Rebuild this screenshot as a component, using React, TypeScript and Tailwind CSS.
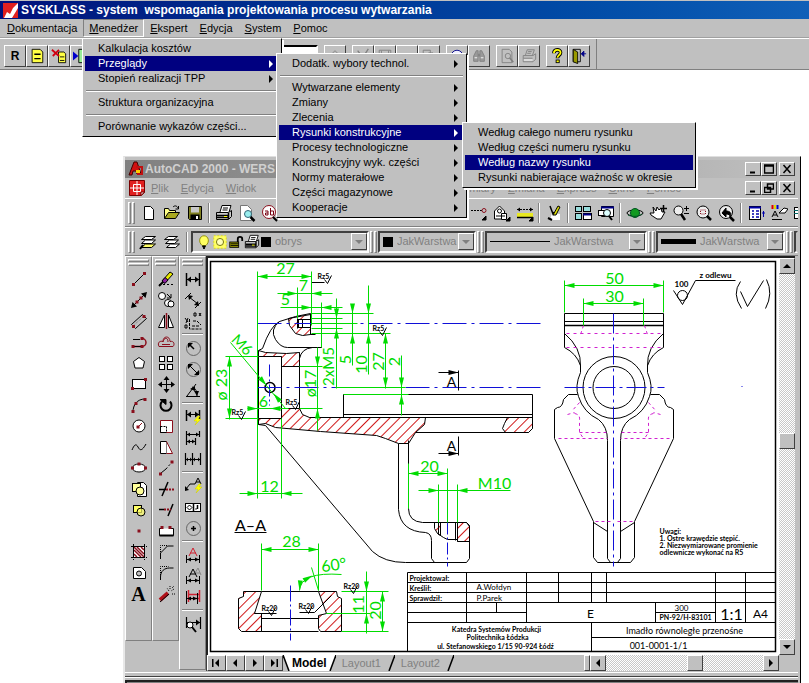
import React from 'react';

type Kids = { children?: React.ReactNode };

/* ---------- icons ---------- */

function Icon({ children, small }: Kids & { small?: boolean }) {
  return (
    <svg
      viewBox="0 0 18 18"
      className={small ? 'h-4 w-4 shrink-0' : 'h-[18px] w-[18px] shrink-0'}
      fill="none"
      stroke="#000"
      strokeWidth="1"
      aria-hidden="true"
    >
      {children}
    </svg>
  );
}

const RED = '#8a0f1c';
const Dot = ({ x, y, c = RED }: { x: number; y: number; c?: string }) => (
  <rect x={x - 1.5} y={y - 1.5} width="3" height="3" fill={c} stroke="none" />
);

const glyph: Record<string, React.ReactNode> = {
  /* draw */
  line: <><path d="M3.5 14.5l11-11" /><Dot x={3.5} y={14.5} /><Dot x={14.5} y={3.5} /></>,
  xline: <><path d="M2 16L16 2" /><path d="M1 17l1.500-6 4.500 4.500zM17 1l-6 1.500 4.500 4.500z" fill="#000" stroke="none" /><Dot x={7} y={11} /><Dot x={11} y={7} /></>,
  mline: <><path d="M1.500 12.500l11-10M5.500 16.500l11-10" /><path d="M3 14l11-10" stroke="#777" strokeDasharray="1 1" /><path d="M1.500 12.500l4 4M12.500 2.500l4 4" /><Dot x={3.500} y={14.500} /><Dot x={14} y={4.500} /></>,
  pline: <><path d="M12 5.500a4 4 0 0 1 0 8H3" stroke={RED} strokeWidth="1.500" /><path d="M3 6.500h7M3 13.500h9" /><Dot x={3} y={13.500} /><Dot x={12} y={13.500} /><Dot x={12} y={5.500} /></>,
  polygon: <path d="M9 3.500l5.500 4-1.500 6.500h-8L3.500 7.500z" fill="#fff" />,
  rect: <><rect x="2.500" y="4.500" width="13" height="9" fill="#fff" /><Dot x={2.500} y={13.500} /><Dot x={15.500} y={4.500} /></>,
  arc: <><path d="M3 16C3 9 7 3 15 3" /><Dot x={3} y={15.500} /><Dot x={6} y={7.500} /><Dot x={15} y={3.500} /></>,
  circle: <><circle cx="9" cy="9" r="6" fill="#fff" /><path d="M8 10l4-4" stroke={RED} /><Dot x={8} y={10} /></>,
  spline: <path d="M2 12c2-5 4-7 6-3s4 4 8-3" />,
  ellipse: <><ellipse cx="9" cy="9" rx="6.500" ry="4" fill="#fff" /><Dot x={2.500} y={9} /><Dot x={9} y={5} /><Dot x={15.500} y={9} /></>,
  insert: <><path d="M7.500 2.500h6l3 3v11h-9z" fill="#fff" /><rect x="2.500" y="3.500" width="8" height="8" fill="#ff9" /><circle cx="10" cy="11" r="4" fill="#ff9" /></>,
  block: <><rect x="3.500" y="4.500" width="8" height="7" fill="#ff6" /><circle cx="11" cy="11" r="4" fill="#ff6" fillOpacity=".7" /></>,
  point: <Dot x={9} y={9} />,
  hatch: <><rect x="3.500" y="3.500" width="11" height="11" fill="#fff" /><path d="M4 7l7 7M4 11l3 3M7 4l7 7M11 4l3 3M4 4l10 10" stroke={RED} strokeWidth="1.500" /><path d="M1 3.500h16M1 14.500h16M3.500 1v16M14.500 1v16" strokeDasharray="2 1" /></>,
  region: <><path d="M3.500 3.500h8l4 4v7h-12z" fill="#fff" /><circle cx="9" cy="9.500" r="2.500" fill="#c0c0c0" /></>,
  /* modify */
  erase: <><path d="M2 14.500h14" strokeDasharray="2 2" /><path d="M5 11l8-9 3 2-8 9z" fill="#e8e800" /><path d="M5 11l3-3.500 3 2.500-3 3.500z" fill="#8c1ea0" /><path d="M2 16l4-4" strokeWidth="2" /></>,
  copy: <><circle cx="5" cy="5" r="3.500" fill="#fff" /><circle cx="11" cy="12" r="3.500" fill="#fff" /><circle cx="14" cy="13" r="3" fill="#fff" /><path d="M10 3l4 4M14 3v4h-4" /></>,
  mirror: <><path d="M7.500 3v12.500h-6z" fill="#fff" /><path d="M11.500 3v12.500h5z" fill="#fff" /><path d="M9.500 1v16" stroke={RED} strokeWidth="1.500" /></>,
  offset: <><path d="M2 13.500c-2-4 1-6 4-5 0-6 7-6 7 0 4-1 5 3 3 5z" stroke={RED} /><path d="M5 11.500h8M6 9c1-5 5-5 5 0" stroke={RED} /></>,
  array: <><rect x="2.500" y="2.500" width="5" height="5" fill="#fff" /><rect x="10.500" y="2.500" width="5" height="5" fill="#fff" /><rect x="2.500" y="10.500" width="5" height="5" fill="#fff" /><rect x="10.500" y="10.500" width="5" height="5" fill="#fff" /></>,
  move: <><path d="M9.500 3v12M3 9.500h13" /><path d="M9.500 1l3 4h-6zM9.500 18l3-4h-6zM1 9.500l4-3v6zM18 9.500l-4-3v6z" fill="#000" stroke="none" /></>,
  rotate: <><path d="M5 5.500a5.500 5.500 0 1 0 8 0" strokeWidth="2" /><path d="M3 3.500h6v5z" fill="#000" /></>,
  scale: <><path d="M3.500 3.500h12v12h-12z" fill="#fff" stroke={RED} /><path d="M3.500 9.500h6v6" strokeDasharray="2 1" /><path d="M3.500 9v6.500h6" /></>,
  stretch: <><path d="M3.500 3.500h6v12h-6z" fill="#fff" /><path d="M9.500 3.500l6 12h-6" fill="#fff" stroke={RED} /></>,
  lengthen: <><path d="M4 14l5-4" /><path d="M9 10l6-7" strokeDasharray="2 2" /><Dot x={3.500} y={15} /><Dot x={15} y={3} /></>,
  trim: <><path d="M2 9.500h7M5 16l6-14" strokeWidth="1.500" /><path d="M9 9.500h8" stroke={RED} strokeDasharray="2 1" strokeWidth="2" /></>,
  extend: <><path d="M2 8.500h5M11 15l5-12" strokeWidth="1.500" /><path d="M7 8.500h7" stroke={RED} strokeDasharray="2 1" strokeWidth="2" /></>,
  breakAt: <><path d="M5 6.500H2.500v7h14v-7h-3" fill="#fff" /><path d="M2.500 13.500h14" strokeWidth="2" /><Dot x={5} y={5.500} /><Dot x={13} y={5.500} /></>,
  chamfer: <><path d="M3.500 16v-6l7-7h6" /><path d="M3.500 9V2.500h7" strokeDasharray="1 1" /></>,
  fillet: <><path d="M3.500 16v-3c0-6 4-9 9-9h4" /><path d="M3.500 11V2.500h8" strokeDasharray="1 1" /></>,
  explode: <><path d="M3 15l8-7" stroke="#b01018" strokeWidth="4" /><path d="M3 17l9-8" strokeWidth="1" /><path d="M13 1v3M17 4l-3 2M12 6l-2-3M15 9h3M15 3l2-2" strokeDasharray="1 1" /></>,
  /* dimension */
  linear: <><path d="M2.500 3v13M15.500 3v13" strokeWidth="1.500" /><path d="M3 9.500h12" /><path d="M3 9.500l4-3v6zM15 9.500l-4-3v6z" fill="#000" stroke="none" /></>,
  aligned: <><path d="M1 8l6-6M11 17l6-6M5 6l9 7" /><path d="M4 4l5 1-4 4zM15 15l-5-1 4-4z" fill="#000" stroke="none" /></>,
  ordinate: <><path d="M5.500 7v10h12M9 9h4l4 4M8 14h8" strokeDasharray="3 1" /><path d="M1 6l3 4M4 6l-2 5M10 1h2v3h-2zM15 1l2 3M17 1l-2 3M1 13h2v3H1z" /></>,
  radius: <><circle cx="9.500" cy="9.500" r="7" stroke="#666" /><path d="M10 10L5 5" strokeWidth="1.500" /><path d="M4 4h5l-5 5z" fill="#000" stroke="none" /></>,
  diameter: <><circle cx="9.500" cy="9.500" r="7" stroke="#666" /><path d="M6 6l7 7" /><path d="M4 4h5l-5 5zM15 15h-5l5-5z" fill="#000" stroke="none" /></>,
  angular: <><path d="M2 15.500h14M3 15L12 3" /><path d="M8 6c4 1 5 5 5 9" /><path d="M6 8l5-3v5zM13 15l-3-5h5z" fill="#000" stroke="none" /></>,
  quick: <><path d="M2.500 2v11M15.500 2v9" strokeWidth="1.500" /><path d="M3 6.500h12" /><path d="M3 6.500l4-3v6zM15 6.500l-4-3v6z" fill="#000" stroke="none" /><path d="M14 8l-4 5h3l-2 4 6-6h-3l2-3z" fill="#ff0" stroke="#cc0" strokeWidth=".5" /></>,
  baseline: <><path d="M2.500 2v14M15.500 2v6M11.500 9v7M3 5.500h12M3 12.500h8" strokeWidth="1.200" /><path d="M3 5.500l3-2v4zM15 5.500l-3-2v4zM3 12.500l3-2v4zM11 12.500l-3-2v4z" fill="#000" stroke="none" /></>,
  cont: <><path d="M1.500 3v12M8.500 3v12M16.500 3v12M2 9.500h14" strokeWidth="1.200" /><path d="M2 9.500l2-2v4zM8 9.500l-2-2v4zM9 9.500l2-2v4zM16 9.500l-2-2v4z" fill="#000" stroke="none" /></>,
  leader: <><path d="M2 12l4-5h5" /><path d="M1 14v-5l4 4z" fill="#000" stroke="none" /><path d="M11 7l3-6 3 6M12 5h4" /><path d="M15 7l-4 5h3l-2 4 6-6h-3l2-3z" fill="#ff0" stroke="#cc0" strokeWidth=".5" /></>,
  tolerance: <><rect x="1.500" y="5.500" width="15" height="8" fill="#fff" /><path d="M9.500 5v8M13.500 7v4M11.500 11h1" strokeWidth="1.500" /><path d="M5.500 7l2.500 2.500L5.500 12 3 9.500z" /></>,
  center: <><circle cx="9.500" cy="9.500" r="7" stroke="#666" /><path d="M9.500 7v5M7 9.500h5" strokeWidth="1.500" /></>,
  dimEdit: <><path d="M5 10l4-8 4 8M6 7h6" stroke="#d02030" /><path d="M2.500 9v8M15.500 9v8M3 13.500h12" /><path d="M3 13.500l4-2v4zM15 13.500l-4-2v4z" fill="#000" stroke="none" /></>,
  dimText: <><path d="M11 6l3-5 3 7M12 6h4" stroke="#888" /><path d="M5 10l4-8 4 8M6 7h6" /><path d="M2.500 9v8M15.500 9v8M3 13.500h12" /><path d="M3 13.500l4-2v4zM15 13.500l-4-2v4z" fill="#000" stroke="none" /></>,
  update: <><path d="M4.500 2v12M15.500 2v12M5 6.500h11M4 10.500h12" stroke="#d02030" strokeWidth="1.500" /><path d="M2.500 3v13M13.500 5v11M3 10.500h10" /><path d="M3 10.500l4-2v4zM13 10.500l-4-2v4z" fill="#000" stroke="none" /></>,
  dimStyle: <><path d="M2.500 2v11M16.500 2v12M3 7.500h13" strokeWidth="1.200" /><path d="M16 7.500l-4-3v6z" fill="#000" stroke="none" /><circle cx="6" cy="10" r="3" fill="#fff" /><path d="M8 12l4 5" strokeWidth="2" /></>,
  /* standard */
  page: <path d="M4.500 2.500h6l3 3v10h-9z" fill="#fff" />,
  open: <><path d="M1.500 14.500v-10h4l1 2h6v3" fill="#ff8" /><path d="M1.500 14.500l4-6h11l-4 6z" fill="#a8a820" /><path d="M10 3c2-2 4-1 5 1M15.500 2v3h-3" /></>,
  save: <><path d="M2.500 2.500h13v13h-12l-1-1z" fill="#808020" /><rect x="5" y="3" width="8" height="5.500" fill="#c8c8c8" stroke="none" /><rect x="5" y="11" width="8" height="4.500" fill="#000" /><rect x="10" y="12" width="2" height="3" fill="#fff" stroke="none" /></>,
  print: <><path d="M5 8l2-6.500h9L14 8" fill="#fff" /><path d="M8 4h5M7.500 6h5" /><path d="M1.500 8.500h12l3-2v6l-3 3h-12z" fill="#ccc" /><path d="M2 11.500h11M2 13.500h11M13.500 9v6" strokeWidth="1.500" /><rect x="9" y="12" width="3" height="1" fill="#ff0" stroke="none" /></>,
  preview: <><path d="M2.500 1.500h7l4 4v11h-11z" fill="#fff" stroke="#777" /><circle cx="10" cy="10" r="3.500" fill="#9ee" stroke="#367" /><path d="M12.500 13l4 4" strokeWidth="2.500" /></>,
  find: <><circle cx="8" cy="8" r="6.500" fill="#fff" stroke={RED} /><path d="M12 13l4 4" strokeWidth="2" /><path d="M4 7h3v4H4.500V9H7M9.500 4v7h3V7h-3" stroke="#701" /></>,
  track: <><path d="M1 6.500h11" strokeDasharray="2 1" /><circle cx="14" cy="6.500" r="2" stroke={RED} /><path d="M16 12v4h-4z" fill="#000" /></>,
  snap: <><path d="M1.500 7l5-5 5 5v8h-10z" fill="#fff" /><circle cx="6.500" cy="7" r="2" /><path d="M8.500 9.500h5v6h-5zM3 12h9" fill="#fff" /><path d="M17 13v4h-4z" fill="#000" /></>,
  distance: <><path d="M1 5.500h16" strokeDasharray="2 1" /><path d="M1 5.500l3-2v4zM17 5.500l-3-2v4z" fill="#000" stroke="none" /><rect x="1" y="9" width="16" height="4" fill="#e8e820" stroke="none" /><path d="M1 13.500h16" strokeWidth="1.500" /><path d="M17 13v4h-4z" fill="#000" /></>,
  redraw: <><path d="M7 9l8 1v6H5z" fill="#fff" stroke="none" /><path d="M5 2l3 8 1-2" strokeWidth="1.500" /><path d="M8 11l5-9 2 1-4 8z" fill="#dd0" /><path d="M3 14l4 2" strokeWidth="2" /></>,
  views: <><rect x="1.500" y="2.500" width="6" height="5" fill="#9dd" /><rect x="9.500" y="2.500" width="7" height="5" fill="#9dd" /><rect x="1.500" y="9.500" width="6" height="6" fill="#9dd" /><rect x="9.500" y="9.500" width="8" height="6" fill="#fff" /><path d="M9 10.500h8" stroke="#008" strokeWidth="2" /></>,
  named: <><path d="M4.500 2.500h12v10h-12z" fill="#fff" /><path d="M4 3.500h13" stroke="#008" strokeWidth="2" /><rect x="1.500" y="6.500" width="7" height="5" fill="#fff" /><circle cx="10" cy="9" r="3.500" fill="#dff" /><path d="M12 12l3 4" strokeWidth="2" /></>,
  orbit: <><ellipse cx="9" cy="9" rx="8" ry="3" /><circle cx="9" cy="9" r="4.500" fill="#119a20" stroke="#052" /><path d="M2 11c4 2 10 2 14-1" stroke="#052" /></>,
  pan: <><path d="M4 3l3 4 1-4 2 3 2-2 1 4 3 0-4 7H8L2 11l-1-2 4 0z" fill="#fff" /><path d="M14.500 1v7M11 4.500h7" strokeWidth="1.500" /></>,
  zoomRt: <><circle cx="6.500" cy="6.500" r="4.500" fill="#eee" /><path d="M9 10l4 6" strokeWidth="2.500" /><path d="M12 4.500h5M14.500 2v5M12 9.500h5" /></>,
  zoomWin: <><circle cx="8" cy="8" r="6" fill="#eee" /><rect x="5.500" y="6" width="5" height="4" stroke={RED} strokeDasharray="1 1" /><path d="M12 12l4 4" strokeWidth="2.500" /></>,
  zoomPrev: <><circle cx="8" cy="8" r="6.500" fill="#eee" /><path d="M12 13l4 4" strokeWidth="2.500" /><path d="M4 9l4-5v3c4 0 6 2 4 6 0-2-1-3-4-3v3z" fill="#000" /></>,
  props: <><rect x="2.500" y="2.500" width="11" height="13" fill="#fff" /><path d="M2 3.500h12" stroke="#00a" strokeWidth="2" /><path d="M5 7h2M9 7h3M5 10h2M9 10h3M5 13h2M9 13h3" stroke="#00a" strokeWidth="1.500" /><path d="M16.500 7v6M15 9h3" stroke="#00a" /></>,
  match: <><path d="M2.500 1v4" stroke="#d00" strokeWidth="2" /><path d="M5 1v4" stroke="#dd0" strokeWidth="2" /><path d="M7.500 1v4" stroke="#00c" strokeWidth="2" /><path d="M2 13l3-6 3 6M3 11h4M2 15.500h10" /><path d="M9 9l5-5 4 1-3 4h-3z" fill="#fff" /></>,
  grid: <><rect x="1.500" y="3.500" width="14" height="11" fill="#fff" /><path d="M1 6.500h14M1 9.500h14M6.500 4v10" stroke="#066" /></>,
  /* layers */
  makeLayer: <><path d="M6.500 3.500h10l-4 3h-10z" fill="#fff" /><path d="M6.500 7h10l-4 3.500h-10z" fill="#fff" /><path d="M6.500 11h10l-4 3.500h-10z" fill="#ff6" /><path d="M1 16l3-4" strokeWidth="2" /></>,
  layers: <><path d="M5.500 3.500h9l-4 3h-9z" fill="#fff" /><path d="M6.500 7h9l-4 3.500h-9z" fill="#fff" /><path d="M7.500 11h9l-4 3.500h-9z" fill="#fff" /></>,
  bulb: <><path d="M7 13C2 9 4 2 9 2s7 7 2 11z" fill="#ffff60" stroke="#880" /><path d="M7 14h4M8 16h2" strokeWidth="2" /></>,
  sun: <><rect x="2" y="2" width="14" height="14" fill="#ff6" stroke="#dd0" strokeDasharray="2 2" /><circle cx="9" cy="9" r="4" fill="#ffb" stroke="#660" /></>,
  lock: <><path d="M11 9V5.500c0-3 5-3 5 0V8" strokeWidth="2" /><rect x="2" y="9" width="10" height="6" fill="#990" /><path d="M3 11h9M3 13h9" /></>,
  /* host application */
  doc: <><path d="M3.500 1.500h9l3 3v12h-12z" fill="#ff4" /><path d="M6 7h7M6 12h7" strokeWidth="1.500" /></>,
  docDel: <><path d="M8.500 4.500h6l2 2v10h-8z" fill="#ff4" /><path d="M10 10h5M10 14h5" /><path d="M1 2l8 7M9 2L2 9" stroke="#d00010" strokeWidth="2" /></>,
  docNext: <><path d="M6.500 1.500h10v15h-10z" fill="#9e9" /><path d="M0 4l6 5-6 5z" fill="#00c" stroke="none" /></>,
  find2: <g stroke="#808080"><path d="M3 15v-6l3-6h2v12zM10 15V3h2l3 6v6z" fill="#999" /><path d="M8 8h2" strokeWidth="3" /><path d="M4 11h3M11 11h3" stroke="#fff" /></g>,
  previewOff: <g stroke="#808080"><path d="M3.500 1.500h8l3 3v12h-11z" /><circle cx="10" cy="9" r="3" /><path d="M12 11l4 5" strokeWidth="2" /></g>,
  printOff: <g stroke="#808080"><path d="M5 8l2-6h8l-2 6M2.500 8.500h11l3-2v6l-3 3h-11zM3 11.500h10M8 4h4M7 6h4" /><path d="M3 13.500h10" stroke="#fff" /></g>,
  help: <><path d="M5.500 6c0-5 7.500-5 7.500-1 0 3-3.500 3-3.500 6.500" strokeWidth="4" /><path d="M5.500 6c0-5 7.500-5 7.500-1 0 3-3.500 3-3.500 6" stroke="#ff0" strokeWidth="2" /><rect x="8" y="13.500" width="3.500" height="3" fill="#ff0" /></>,
  exit: <><path d="M2.500 1.500h8v14h-8z" /><path d="M2.500 1.500l5 3v13l-5-2z" fill="#990" /><path d="M12 6.500h5M11.500 6.500l3-3v6z" stroke="#008" fill="#008" /></>,
  folder: <g stroke="#808080"><path d="M4 16V8l5-5 5 5v8" /></g>,
  scissors: <g stroke="#808080" strokeWidth="1.500"><path d="M3 3l9 12M15 1L6 15" /></g>,
  floppy: <g stroke="#808080"><path d="M2.500 2.500h13v13h-13zM5 3v5h8V3" /></g>,
  undo: <g stroke="#808080"><path d="M3 10c3-5 9-5 11 1" strokeWidth="1.500" /></g>,
  paste: <g stroke="#808080"><path d="M2.500 2.500h8v12h-8zM8.500 5.500h5l3 3v8h-8z" /></g>,
  lens: <circle cx="9" cy="9" r="6.500" stroke="#008" fill="#eef" />,
};

/* ---------- shared chrome ---------- */

const raised = 'border border-t-white border-l-white border-r-[#404040] border-b-[#404040] bg-[#c0c0c0]';

function Tool({ name, label, w = 'w-[23px]' }: { name: string; label: string; w?: string }) {
  return (
    <button type="button" aria-label={label} className={`flex h-[21px] shrink-0 items-center justify-center ${w}`}>
      <Icon>{glyph[name]}</Icon>
    </button>
  );
}

function Big({ name, label }: { name?: string; label: string }) {
  return (
    <button type="button" aria-label={label} className={`flex h-[22px] w-[22px] shrink-0 items-center justify-center text-[12px] font-bold ${raised}`}>
      {name ? <Icon small>{glyph[name]}</Icon> : label}
    </button>
  );
}

const VSep = () => <div className="mx-[2px] h-5 w-[2px] shrink-0 border-l border-r border-l-[#808080] border-r-white" />;

const Grip = () => (
  <div className="flex h-[22px] shrink-0 gap-px">
    <div className="w-[3px] border border-t-white border-l-white border-r-[#808080] border-b-[#808080]" />
    <div className="w-[3px] border border-t-white border-l-white border-r-[#808080] border-b-[#808080]" />
  </div>
);

function MenuBarItem({ text, open }: { text: string; open?: boolean }) {
  return (
    <button
      type="button"
      className={`h-[18px] shrink-0 border px-[5px] leading-4 ${open ? 'border-t-[#808080] border-l-[#808080] border-r-white border-b-white' : 'border-transparent'}`}
    >
      <u>{text[0]}</u>
      {text.slice(1)}
    </button>
  );
}

type Entry = { text: string; sub?: boolean; on?: boolean } | null;

function Menu({ items, place, label }: { items: Entry[]; place: string; label: string }) {
  return (
    <div
      role="menu"
      aria-label={label}
      className={`absolute border border-t-white border-l-white border-r-black border-b-black bg-[#c0c0c0] p-[2px] shadow-[2px_2px_0_#fff] ${place}`}
    >
      {items.map((it, i) =>
        it ? (
          <button
            key={i}
            type="button"
            role="menuitem"
            className={`flex h-[15px] w-full items-center justify-between pl-[13px] pr-[6px] leading-[15px] ${it.on ? 'bg-[#000080] text-white' : ''}`}
          >
            {it.text}
            {it.sub && (
              <svg viewBox="0 0 4 8" className="h-2 w-1" fill="currentColor" aria-hidden="true">
                <path d="M0 0l4 4-4 4z" />
              </svg>
            )}
          </button>
        ) : (
          <div key={i} className="flex h-[9px] items-center px-px">
            <div className="h-[2px] flex-1 border-t border-b border-t-[#808080] border-b-white" />
          </div>
        ),
      )}
    </div>
  );
}

function WinButton({ label, children }: Kids & { label: string }) {
  return (
    <button type="button" aria-label={label} className={`flex h-[14px] w-4 items-center justify-center ${raised}`}>
      <svg viewBox="0 0 10 10" className="h-[10px] w-[10px]" fill="none" stroke="#000" strokeWidth="1.500" aria-hidden="true">
        {children}
      </svg>
    </button>
  );
}

const Tri = ({ dir, c = '#000' }: { dir: 'u' | 'd' | 'l' | 'r'; c?: string }) => (
  <svg viewBox="0 0 8 8" className="h-2 w-2" fill={c} aria-hidden="true">
    <path d={{ u: 'M4 2l4 4H0z', d: 'M4 6l4-4H0z', l: 'M2 4l4-4v8z', r: 'M6 4L2 0v8z' }[dir]} />
  </svg>
);

function Combo({ label, value, w, children }: Kids & { label: string; value: string; w: string }) {
  return (
    <div className={`flex h-[22px] shrink-0 items-center border-2 border-t-[#404040] border-l-[#404040] border-r-white border-b-white pl-[3px] ${w}`}>
      {children}
      <select aria-label={label} className="min-w-0 flex-1 appearance-none bg-transparent pl-1 text-[#808080]">
        <option>{value}</option>
      </select>
      <span className={`flex h-[17px] w-4 shrink-0 items-center justify-center ${raised}`}>
        <Tri dir="d" c="#808080" />
      </span>
    </div>
  );
}

function SideBar({ items, label, h }: { items: (string | null)[]; label: string; h: string }) {
  return (
    <div role="toolbar" aria-label={label} className={`w-[27px] shrink-0 border border-t-white border-l-white border-r-[#808080] border-b-[#808080] ${h}`}>
      <div className="mx-[2px] mt-[2px] mb-[2px] flex flex-col gap-px">
        <div className="h-[3px] border border-t-white border-l-white border-r-[#808080] border-b-[#808080]" />
        <div className="h-[3px] border border-t-white border-l-white border-r-[#808080] border-b-[#808080]" />
      </div>
      {items.map((n, i) =>
        n === 'text' ? (
          <button key={i} type="button" className="h-[23px] w-full font-['Liberation_Serif',serif] text-[20px] leading-[23px] font-bold">A</button>
        ) : n ? (
          <Tool key={i} name={n} label={n} w="w-full" />
        ) : (
          <div key={i} className="mx-[2px] my-[2px] h-[2px] border-t border-b border-t-[#808080] border-b-white" />
        ),
      )}
    </div>
  );
}

/* ---------- drawing ---------- */

const G = '#00dc00';
const B = '#1010d8';
const M = '#d020d0';

function T({
  x, y, s, c = '#000', a = 'middle', r, w = 400, children,
}: Kids & { x: number; y: number; s: number; c?: string; a?: 'start' | 'middle' | 'end'; r?: number; w?: number }) {
  return (
    <text x={x} y={y} fontSize={s} fill={c} stroke="none" textAnchor={a} fontWeight={w} transform={r ? `rotate(${r} ${x} ${y})` : undefined}>
      {children}
    </text>
  );
}

/* Filled arrow head whose tip is at (x, y), turned clockwise from pointing right. */
const Ar = ({ x, y, r = 0, c = G }: { x: number; y: number; r?: number; c?: string }) => (
  <path d={`M${x} ${y}l-10-2.500v5z`} fill={c} stroke="none" transform={`rotate(${r} ${x} ${y})`} />
);

const Rough = ({ x, y, t }: { x: number; y: number; t: string }) => (
  <g>
    <T x={x} y={y} s={7} a="start" w={700}>{t}</T>
    <path d={`M${x + 7} ${y + 1}l3 4 4-8`} />
  </g>
);

const hatched = [
  'M288 318L310 314V319H298V327H310V334L302 335L295 333L289 325Z',
  'M258 350L265 352L286 353L299 352V366H281V356H258Z',
  'M258 418H281V408H299L302 414L309 417H425L424 424L415 432L408 443H398L385 438L376 435L320 431L275 427L265 423L258 424Z',
  'M507 417H532V428L528 432H505L502 428L504 423Z',
  'M434 522H440V535L437 533L434 528Z',
  'M457 522H466L469 525V541H457Z',
  'M243 591H261L254 613H261V631H241L238 628V598L243 596Z',
  'M318 591H336L337 596L341 598V631H320L318 628V615L326 613Z',
];

function Drawing() {
  return (
    <svg viewBox="208 258 571 397" className="block h-[397px] w-[571px]" role="img" aria-label="Imadło równoległe przenośne" fill="none" stroke="#000" strokeWidth="1">
      <defs>
        <pattern id="hatch" width="7" height="7" patternUnits="userSpaceOnUse" patternTransform="rotate(45)">
          <path d="M3.500 0v7" stroke="#d01818" strokeWidth="1" />
        </pattern>
      </defs>
      <rect x="210.500" y="261.500" width="565" height="390" strokeWidth="1.500" />
      <g transform="translate(.5 .5)">
        {hatched.map((d) => <path key={d} d={d} fill="url(#hatch)" />)}

        {/* main view */}
        <path d="M310 313L295 316L279 321Q270 325 262 348L258 350M279 321Q269 329 275 339Q280 347 287 347H321V334M321 347H312Q301 348 299 358" />
        <path d="M297 319H310M297 327H310M297 318V328M302 319V327M310 313V334H315M311 282H324" />
        <path d="M281 356V418M299 352V408M258 356V424M281 366H299M281 408H299" />
        <path d="M343 417V394H532V428M343 414H532M309 417H532M415 432H528" />
        <path d="M258 424L265 425L372 551Q384 562 405 562H466L469 558V526L466 522H422Q408 521 408 508V440M398 443V509Q400 531 425 532Q431 533 431 540V558L434 562" />
        <path d="M438 522V534M440 522V535M455 522V540M457 522V541M437 533L443 537L447 539H457" />
        <circle cx="269.500" cy="387" r="5" strokeWidth="1.500" />
        <path d="M257 323H543" stroke={B} strokeDasharray="24 5 3 5" />
        <path d="M257 387H543" stroke={B} strokeDasharray="24 5 3 5" />
        <path d="M269 364V405" stroke={B} strokeDasharray="12 3 2 3" />
        <path d="M447 522V566" stroke={B} strokeDasharray="12 3 2 3" />

        {/* section marks */}
        <path d="M458 370V390M438 372H458M458 436V455M438 453H458" />
        <Ar x={458} y={372} c="#000" /><Ar x={458} y={453} c="#000" />
        <T x={451} y={386} s={14}>A</T><T x={451} y={450} s={14}>A</T>
        <T x={250} y={530} s={16}>A–A</T>
        <path d="M234 532H266" />

        {/* dimensions of the main view */}
        <g stroke={G}>
          <path d="M257 271V498M257 276H311M311 271V325M277 293H332M297 287V318M280 307H342M321 302V347" />
          <path d="M336 298V388M352 305V365M368 285V374M385 333V388M401 355V415M311 318H342M311 328H342M311 313H373M311 333H390M311 323H357M335 387H405M343 394H408" />
          <path d="M225 356H258M225 418H258M229 356V419M230 342L285 408M247 408H288M317 347V430M299 366H322M299 408H322" />
          <path d="M281 418V498M239 493H302M408 463V508M408 473H447M447 468V522M418 490H510M438 484V522M457 484V522" />
        </g>
        <Ar x={257} y={276} r={180} /><Ar x={311} y={276} />
        <Ar x={297} y={293} /><Ar x={311} y={293} r={180} />
        <Ar x={311} y={307} /><Ar x={321} y={307} r={180} />
        <Ar x={336} y={318} r={90} /><Ar x={336} y={328} r={-90} />
        <Ar x={352} y={313} r={90} /><Ar x={352} y={333} r={-90} />
        <Ar x={368} y={313} r={90} /><Ar x={368} y={333} r={-90} />
        <Ar x={385} y={333} r={-90} /><Ar x={385} y={387} r={90} />
        <Ar x={401} y={387} r={90} /><Ar x={401} y={394} r={-90} />
        <Ar x={229} y={356} r={-90} /><Ar x={229} y={418} r={90} />
        <Ar x={266} y={385} r={50} /><Ar x={273} y={393} r={230} />
        <Ar x={257} y={408} /><Ar x={270} y={408} r={180} />
        <Ar x={317} y={366} r={90} /><Ar x={317} y={408} r={-90} />
        <Ar x={257} y={493} /><Ar x={281} y={493} r={180} />
        <Ar x={408} y={473} r={180} /><Ar x={447} y={473} />
        <Ar x={438} y={490} /><Ar x={457} y={490} r={180} />
        <T x={285} y={273} s={16} c={G}>27</T>
        <T x={303} y={290} s={16} c={G}>7</T>
        <T x={285} y={304} s={16} c={G}>5</T>
        <T x={333} y={366} s={15} c={G} r={-90}>2xM5</T>
        <T x={350} y={359} s={16} c={G} r={-90}>5</T>
        <T x={366} y={364} s={16} c={G} r={-90}>10</T>
        <T x={383} y={361} s={16} c={G} r={-90}>27</T>
        <T x={399} y={361} s={16} c={G} r={-90}>2</T>
        <T x={226} y={384} s={16} c={G} r={-90}>ø 23</T>
        <T x={238} y={348} s={15} c={G} r={45}>M6</T>
        <T x={263} y={406} s={16} c={G}>6</T>
        <T x={315} y={383} s={16} c={G} r={-90}>ø17</T>
        <T x={269} y={491} s={16} c={G}>12</T>
        <T x={429} y={471} s={16} c={G}>20</T>
        <T x={494} y={488} s={16} c={G}>M10</T>
        <Rough x={317} y={278} t="Rz5" />
        <Rough x={372} y={330} t="Rz5" />
        <Rough x={231} y={414} t="Rz5" />
        <Rough x={285} y={404} t="Rz5" />

        {/* section A–A */}
        <path d="M261 591H318M261 631H318M254 613H276M261 613V631M261 618H318M299 612H314L331 595" />
        <path d="M290 585V640" stroke={B} strokeDasharray="16 3 2 3" />
        <g stroke={G}>
          <path d="M261 543V590M318 543V590M261 549H318M299 590Q300 571 341 574M311 567L318 590M341 591H388M326 613H370M341 631H388M366 571V633M382 591V631" />
        </g>
        <Ar x={261} y={549} r={180} /><Ar x={318} y={549} />
        <Ar x={299} y={590} r={95} /><Ar x={312} y={575} r={-30} />
        <Ar x={366} y={591} r={90} /><Ar x={366} y={613} r={-90} />
        <Ar x={382} y={591} r={-90} /><Ar x={382} y={631} r={90} />
        <T x={291} y={546} s={16} c={G}>28</T>
        <T x={334} y={570} s={16} c={G} r={-8}>60°</T>
        <T x={363} y={604} s={16} c={G} r={-90}>11</T>
        <T x={380} y={610} s={16} c={G} r={-90}>20</T>
        <Rough x={343} y={588} t="Rz20" />
        <Rough x={261} y={610} t="Rz20" />
        <Rough x={298} y={608} t="Rz20" />

        {/* end view */}
        <path d="M564 347V313H663V347M564 321H663" />
        <path d="M564 325H663" strokeWidth="1.500" />
        {[undefined, 'translate(1227 0) scale(-1 1)'].map((t, i) => (
          <g key={i} transform={t}>
            <path d="M564 333Q581 347 580 366M564 347Q576 353 580 365V372Q574 386 578 396Q583 412 598 419Q607 426 607 440V558L610 562" />
            <path d="M577 394H568L563 399Q562 407 557 407L554 409V438L593 521V557L597 562H614M593 522L607 531" />
            <path d="M567 414L574 412M579 402L571 411M574 413Q580 414 579 420V432L583 438M579 432H606M558 438H607M583 325L580 334M595 521H613" stroke={M} strokeDasharray="3 3" />
          </g>
        ))}
        <path d="M566 333H663M566 347H663" stroke={M} strokeDasharray="3 4" />
        <circle cx="613.500" cy="387" r="31" />
        <circle cx="613.500" cy="387" r="21" />
        <path d="M564 387H664" stroke={B} strokeDasharray="20 4 3 4" />
        <path d="M613 313V566" stroke={B} strokeDasharray="20 4 3 4" />
        <g stroke={G}>
          <path d="M564 280V312M663 280V312M564 285H663M583 298V325M643 298V325M583 303H643" />
        </g>
        <Ar x={564} y={285} r={180} /><Ar x={663} y={285} />
        <Ar x={583} y={303} r={180} /><Ar x={643} y={303} />
        <T x={614} y={283} s={16} c={G}>50</T>
        <T x={614} y={301} s={16} c={G}>30</T>

        {/* general finish */}
        <path d="M673 290L682 304L695 280H735M740 281Q731 293 741 308M740 291L747 306L763 280M766 279Q773 293 765 308" />
        <circle cx="682" cy="295" r="5" />
        <T x={681} y={286} s={8} w={700}>100</T>
        <T x={715} y={277} s={8} w={700}>z odlewu</T>
        <path d="M741 386h1" stroke={B} />

        {/* notes */}
        <T x={659} y={533} s={7} a="start" w={700}>Uwagi:</T>
        <T x={659} y={540} s={7} a="start" w={700}>1. Ostre krawędzie stępić.</T>
        <T x={659} y={547} s={7} a="start" w={700}>2. Niezwymiarowane promienie</T>
        <T x={659} y={554} s={7} a="start" w={700}>odlewnicze wykonać na R5</T>

        {/* title block */}
        <path d="M407 651V572H775M407 582H775M407 592H775M407 602H775M407 612H526M655 612H715M407 622H775M591 637H775" />
        <path d="M466 572V622M496 602V612M526 572V622M558 572V602M591 572V602M591 622V651M606 572V602M655 602V622M715 572V622M745 572V622" />
        <T x={409} y={580} s={7} a="start" w={700}>Projektował:</T>
        <T x={409} y={590} s={7} a="start" w={700}>Kreślił:</T>
        <T x={409} y={600} s={7} a="start" w={700}>Sprawdził:</T>
        <T x={476} y={589} s={8} a="start" w={400}>A.Wołdyn</T>
        <T x={476} y={600} s={8} a="start" w={400}>P.Parek</T>
        <T x={590} y={617} s={12}>E</T>
        <T x={681} y={610} s={8} w={400}>300</T>
        <T x={685} y={619} s={7} w={700}>PN-92/H-83101</T>
        <T x={731} y={619} s={16}>1:1</T>
        <T x={760} y={617} s={12}>A4</T>
        <T x={496} y={631} s={7} w={700}>Katedra Systemów Produkcji</T>
        <T x={497} y={639} s={7} w={700}>Politechnika Łódzka</T>
        <T x={495} y={648} s={7} w={700}>ul. Stefanowskiego 1/15 90-924 Łódź</T>
        <T x={684} y={633} s={9} w={400}>Imadło równoległe przenośne</T>
        <T x={658} y={648} s={9} w={400}>001-0001-1/1</T>
      </g>
    </svg>
  );
}

/* ---------- page ---------- */

const draw = ['line', 'xline', 'mline', 'pline', 'polygon', 'rect', 'arc', 'circle', 'spline', 'ellipse', 'insert', 'block', 'point', 'hatch', 'region', 'text'];
const modify = ['erase', 'copy', 'mirror', 'offset', 'array', 'move', 'rotate', 'scale', 'stretch', 'lengthen', 'trim', 'extend', 'breakAt', 'chamfer', 'fillet', 'explode'];
const dims = ['linear', 'aligned', 'ordinate', null, 'radius', 'diameter', 'angular', null, 'quick', 'baseline', 'cont', null, 'leader', 'tolerance', 'center', null, 'dimEdit', 'dimText', 'update', null, 'dimStyle'];
const checks = 'bg-[conic-gradient(#fff_25%,#c8c8c8_0_50%,#fff_0_75%,#c8c8c8_0)] bg-[length:2px_2px]';

const Slant = ({ left, fill }: { left?: boolean; fill?: string }) => (
  <svg viewBox="0 0 8 16" className="h-4 w-2 shrink-0" fill="none" stroke="#000" strokeWidth="1.500" aria-hidden="true">
    {fill && <path d={left ? 'M0 0H8V16H6z' : 'M0 0H8L2 16H0z'} fill={fill} stroke="none" />}
    <path d={left ? 'M0 0L6 16' : 'M8 0L2 16'} />
  </svg>
);

export default function App() {
  return (
    <div className="relative h-screen overflow-hidden bg-white font-['Liberation_Sans',Arial,sans-serif] text-[11px] text-black">
      <header className="bg-[#c0c0c0]">
        <div className="flex h-[19px] items-center border-t border-t-[#c0c0c0] bg-linear-to-r from-[#00107b] to-[#1060b8] pl-[3px]">
          <svg viewBox="0 0 15 15" className="h-[15px] w-[15px]" aria-hidden="true">
            <rect width="15" height="15" fill="#e02020" />
            <path d="M15 0v5L9 15H1l3-6 3 2 3-6z" fill="#fff" />
          </svg>
          <h1 className="pl-[3px] text-[12px] font-bold whitespace-pre text-white">{'SYSKLASS - system  wspomagania projektowania procesu wytwarzania'}</h1>
        </div>
        <nav className="flex h-[19px] items-end border-b border-b-[#a0a0a0] pl-px">
          <MenuBarItem text="Dokumentacja" />
          <MenuBarItem text="Menedżer" open />
          {['Ekspert', 'Edycja', 'System', 'Pomoc'].map((t) => <MenuBarItem key={t} text={t} />)}
        </nav>
        <div className="flex h-8 border-t border-b border-t-white border-b-[#808080]">
          <div className="flex w-[597px] items-center gap-[6px] border-r border-r-[#808080] pt-[3px] pl-1">
            <div className="flex">
              <Big label="R" />
              <Big name="doc" label="Nowy" />
              <Big name="docDel" label="Usuń" />
              <Big name="docNext" label="Dalej" />
            </div>
            <div className="w-[178px] shrink-0" />
            <div className="h-[22px] w-9 shrink-0 border-2 border-t-black border-l-black border-r-white border-b-white bg-white" />
            <Big name="folder" label="W górę" />
            <div className="flex">
              <Big name="scissors" label="Wytnij" />
              <Big name="floppy" label="Zapisz" />
              <Big name="undo" label="Cofnij" />
              <Big name="paste" label="Wklej" />
            </div>
            <div className="flex">
              <Big name="lens" label="Szukaj" />
              <Big name="find2" label="Znajdź" />
            </div>
            <div className="flex">
              <Big name="previewOff" label="Podgląd" />
              <Big name="printOff" label="Drukuj" />
            </div>
            <div className="flex">
              <Big name="help" label="Pomoc" />
              <Big name="exit" label="Wyjście" />
            </div>
          </div>
        </div>
      </header>

      <main className="mt-[86px] mr-2 ml-[123px] border-t border-r border-l-2 border-t-[#dfdfdf] border-r-black border-l-[#e8e8e8] bg-[#c0c0c0] pt-[3px] pr-[2px]">
        <div className="flex h-[18px] items-center bg-linear-to-r from-[#808080] to-[#c0c0c0] pr-[3px] pl-[3px]">
          <svg viewBox="0 0 16 16" className="h-4 w-4" aria-hidden="true">
            <path d="M1 14L6 1h3l4 12h-4l-1-3H5l-1 4z" fill="#d01010" stroke="#400" />
            <path d="M8 6h6v7H9" fill="none" stroke="#c01010" strokeWidth="2" />
            <rect x="8" y="9" width="4" height="3" fill="#fc0" />
          </svg>
          <h2 className="flex-1 pl-px text-[12px] font-bold text-[#d0d0d0]">AutoCAD 2000 - WERS</h2>
          <WinButton label="Minimalizuj"><path d="M2 8.500h5" strokeWidth="2" /></WinButton>
          <WinButton label="Maksymalizuj"><path d="M.5 1h9v8h-9zM.5 2h9" /></WinButton>
          <div className="w-[2px]" />
          <WinButton label="Zamknij"><path d="M1.500 1l7 8M8.500 1l-7 8" /></WinButton>
        </div>
        <div className="flex h-5 items-center pr-[3px] pl-1 text-[#808080]">
          <svg viewBox="0 0 16 16" className="h-4 w-4" aria-hidden="true">
            <path d="M.5.5h15v12l-3 3H.5z" fill="#e02020" stroke="#700" />
            <path d="M8 1v14M1 8h14M4.500 4.500h7v7h-7z" fill="none" stroke="#fff" />
            <path d="M15.500 12l-3.500 3.500V12z" fill="#fff" stroke="#700" />
          </svg>
          <nav className="flex flex-1 items-center">
            {['Plik', 'Edycja', 'Widok'].map((t) => <MenuBarItem key={t} text={t} />)}
            <div className="w-[185px] shrink-0" />
            {['Wymiary', 'Zmiana', 'Express', 'Okno', 'Pomoc'].map((t) => <MenuBarItem key={t} text={t} />)}
          </nav>
          <WinButton label="Minimalizuj rysunek"><path d="M2 8.500h5" strokeWidth="2" /></WinButton>
          <WinButton label="Przywróć rysunek"><path d="M3.500 1h6v5h-6zM.500 4.500h6v5h-6z" fill="#c0c0c0" /></WinButton>
          <div className="w-[2px]" />
          <WinButton label="Zamknij rysunek"><path d="M1.500 1l7 8M8.500 1l-7 8" /></WinButton>
        </div>

        <div role="toolbar" aria-label="Standard" className="flex h-[29px] items-center overflow-hidden border-t border-b border-t-white border-b-[#808080] pl-[3px]">
          <Grip />
          <div className="w-[2px] shrink-0" />
          <Tool name="page" label="Nowy" />
          <Tool name="open" label="Otwórz" />
          <Tool name="save" label="Zapisz" />
          <VSep />
          <Tool name="print" label="Drukuj" />
          <Tool name="preview" label="Podgląd" />
          <Tool name="find" label="Znajdź" />
          <div className="w-[186px] shrink-0" />
          <Tool name="track" label="Śledzenie" />
          <Tool name="snap" label="Lokalizacja" />
          <Tool name="distance" label="Odległość" />
          <VSep />
          <Tool name="redraw" label="Przerysuj" />
          <VSep />
          <Tool name="views" label="Widoki" />
          <Tool name="named" label="Nazwane widoki" />
          <VSep />
          <Tool name="orbit" label="Orbita" />
          <Tool name="pan" label="Przesuń" />
          <Tool name="zoomRt" label="Zoom" />
          <Tool name="zoomWin" label="Zoom okno" />
          <Tool name="zoomPrev" label="Zoom poprzedni" />
          <VSep />
          <Tool name="props" label="Cechy" />
          <Tool name="match" label="Uzgodnij cechy" />
          <Tool name="grid" label="Tabela" />
        </div>

        <div role="toolbar" aria-label="Właściwości obiektu" className="flex h-[29px] items-center gap-px overflow-hidden border-t border-b border-t-white border-b-[#808080] pl-[3px]">
          <Grip />
          <Tool name="makeLayer" label="Ustaw warstwę" />
          <Tool name="layers" label="Warstwy" />
          <VSep />
          <Combo label="Warstwa" value="obrys" w="w-[178px]">
            <Icon small>{glyph.bulb}</Icon>
            <Icon small>{glyph.sun}</Icon>
            <Icon small>{glyph.lock}</Icon>
            <Icon small>{glyph.print}</Icon>
            <span className="ml-px h-[10px] w-[10px] shrink-0 bg-black" />
          </Combo>
          <Grip />
          <Combo label="Kolor" value="JakWarstwa" w="w-[98px]">
            <span className="h-[10px] w-[10px] shrink-0 bg-black" />
          </Combo>
          <Grip />
          <Combo label="Rodzaj linii" value="JakWarstwa" w="w-[162px]">
            <span className="h-px w-[60px] shrink-0 bg-black" />
          </Combo>
          <Grip />
          <Combo label="Szerokość linii" value="JakWarstwa" w="w-[129px]">
            <span className="h-[5px] w-[35px] shrink-0 bg-black" />
          </Combo>
          <Grip />
          <div className="h-[22px] flex-1 border-2 border-t-[#404040] border-l-[#404040] border-r-transparent border-b-white" />
        </div>

        <div className="flex">
          <SideBar items={draw} label="Rysuj" h="h-[385px]" />
          <SideBar items={modify} label="Zmiana" h="h-[385px]" />
          <SideBar items={dims} label="Wymiary" h="h-[414px]" />
          <div className="min-w-0 flex-1">
            <div className="flex">
              <div className="min-w-0 flex-1 overflow-hidden border-t-2 border-l-2 border-t-[#202020] border-l-[#202020] bg-white font-[Lato,sans-serif]">
                <Drawing />
              </div>
              <div className={`mr-[3px] flex w-4 flex-col border-t-2 border-t-[#202020] ${checks}`}>
                <button type="button" aria-label="Przewiń w górę" className={`flex h-4 items-center justify-center ${raised}`}><Tri dir="u" /></button>
                <div className="flex-[159]" />
                <div className={`h-4 ${raised}`} />
                <div className="flex-[190]" />
                <button type="button" aria-label="Przewiń w dół" className={`flex h-4 items-center justify-center ${raised}`}><Tri dir="d" /></button>
              </div>
            </div>
            <div className="flex h-4 border-l border-l-[#404040] pr-[19px]">
              {['Pierwszy', 'Poprzedni', 'Następny', 'Ostatni'].map((t, i) => (
                <button key={t} type="button" aria-label={t} className={`flex h-4 w-[19px] items-center justify-center ${raised}`}>
                  <svg viewBox="0 0 9 8" className="h-2 w-[9px]" fill="#000" aria-hidden="true">
                    <path d={['M0 0h1.500v8H0zM7 0v8L3 4z', 'M6 0v8L2 4z', 'M3 0v8l4-4z', 'M7.500 0H9v8H7.500zM2 0v8l4-4z'][i]} />
                  </svg>
                </button>
              ))}
              <Slant left fill="#fff" />
              <button type="button" className="bg-white px-px text-[12px] leading-4 font-bold">Model</button>
              <Slant fill="#fff" />
              <button type="button" className="px-[6px] leading-4 text-[#808080]">Layout1</button>
              <Slant />
              <button type="button" className="px-[6px] leading-4 text-[#808080]">Layout2</button>
              <Slant />
              <div className="flex-1" />
              <div className={`flex w-[195px] ${checks}`}>
                <div className={`w-[6px] ${raised}`} />
                <button type="button" aria-label="Przewiń w lewo" className={`flex w-4 items-center justify-center ${raised}`}><Tri dir="l" /></button>
                <div className="flex-[81]" />
                <div className={`w-4 ${raised}`} />
                <div className="flex-[60]" />
                <button type="button" aria-label="Przewiń w prawo" className={`flex w-4 items-center justify-center ${raised}`}><Tri dir="r" /></button>
              </div>
            </div>
          </div>
        </div>
        <div className="mt-px h-[5px] border-t border-b border-t-white border-b-[#404040]" />
        <div className="h-[3px] border-t border-t-white" />
        <div className="h-8 border-t-2 border-l-2 border-t-[#202020] border-l-[#202020] bg-[#808080]" />
      </main>

      <Menu
        label="Menedżer"
        place="top-[38px] left-[82px] w-[200px]"
        items={[
          { text: 'Kalkulacja kosztów' },
          { text: 'Przeglądy', sub: true, on: true },
          { text: 'Stopień realizacji TPP', sub: true },
          null,
          { text: 'Struktura organizacyjna' },
          null,
          { text: 'Porównanie wykazów części...' },
        ]}
      />
      <Menu
        label="Przeglądy"
        place="top-[53px] left-[276px] w-[191px]"
        items={[
          { text: 'Dodatk. wybory technol.', sub: true },
          null,
          { text: 'Wytwarzane elementy', sub: true },
          { text: 'Zmiany', sub: true },
          { text: 'Zlecenia', sub: true },
          { text: 'Rysunki konstrukcyjne', sub: true, on: true },
          { text: 'Procesy technologiczne', sub: true },
          { text: 'Konstrukcyjny wyk. części', sub: true },
          { text: 'Normy materałowe', sub: true },
          { text: 'Części magazynowe', sub: true },
          { text: 'Kooperacje', sub: true },
        ]}
      />
      <Menu
        label="Rysunki konstrukcyjne"
        place="top-[122px] left-[462px] w-[234px]"
        items={[
          { text: 'Według całego numeru rysunku' },
          { text: 'Według części numeru rysunku' },
          { text: 'Według nazwy rysunku', on: true },
          { text: 'Rysunki nabierające ważnośc w okresie' },
        ]}
      />
    </div>
  );
}
